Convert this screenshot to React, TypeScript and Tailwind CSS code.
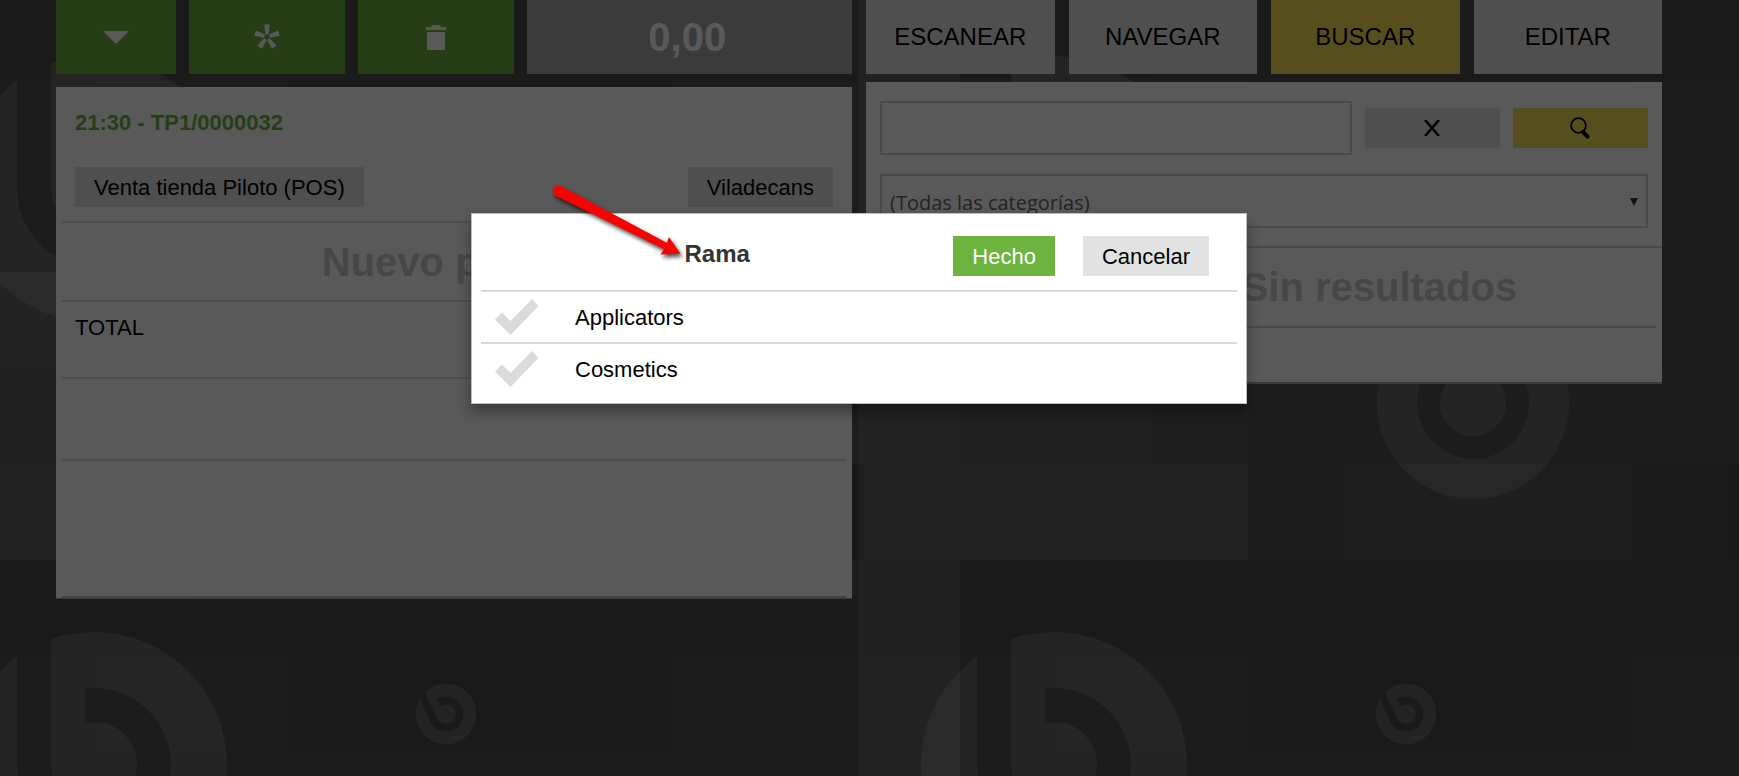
import React from 'react';

// Tile of the page background: 10 x 6 squares of 96px
const squares = [
    { x: 0, y: 0, w: 192, h: 96, fill: '#4a4a4a' },
    { x: 192, y: 0, w: 768, h: 96, fill: '#4d4d4d' },
    { x: 96, y: 96, w: 192, h: 96, fill: '#525252' },
    { x: 288, y: 96, w: 384, h: 96, fill: '#4b4b4b' },
    { x: 672, y: 96, w: 288, h: 96, fill: '#515151' },
    { x: 0, y: 288, w: 96, h: 96, fill: '#646464' },
    { x: 0, y: 384, w: 192, h: 96, fill: '#606060' },
    { x: 192, y: 384, w: 96, h: 96, fill: '#575757' },
    { x: 288, y: 384, w: 672, h: 96, fill: '#535353' },
    { x: 0, y: 480, w: 96, h: 96, fill: '#616161' },
    { x: 96, y: 480, w: 192, h: 96, fill: '#646464' },
    { x: 288, y: 480, w: 96, h: 96, fill: '#535353' },
    { x: 384, y: 480, w: 96, h: 96, fill: '#585858' },
    { x: 480, y: 480, w: 96, h: 96, fill: '#5a5a5a' },
    { x: 576, y: 480, w: 96, h: 96, fill: '#575757' },
    { x: 672, y: 480, w: 96, h: 96, fill: '#4e4e4e' },
    { x: 768, y: 480, w: 96, h: 96, fill: '#474747' },
];

const Backdrop: React.FC = () => (
    <svg className="absolute inset-0 h-full w-full" aria-hidden="true">
        <defs>
            <mask id="logo-mask" maskUnits="userSpaceOnUse" x="-140" y="-140" width="280" height="280">
                <circle r="133" fill="white" />
                <circle r="60" fill="none" stroke="black" strokeWidth="34" />
                <rect x="-77" y="-140" width="34" height="140" fill="black" />
                <rect x="-43" y="-100" width="34" height="100" fill="white" />
            </mask>
            <g id="logo">
                <rect x="-140" y="-140" width="280" height="280" fill="white" fillOpacity="0.16" mask="url(#logo-mask)" />
            </g>
            <pattern id="tile" x="0" y="-16" width="960" height="576" patternUnits="userSpaceOnUse">
                <rect width="960" height="576" fill="#505050" />
                {squares.map((s) => (
                    <rect key={`${s.x}-${s.y}`} x={s.x} y={s.y} width={s.w} height={s.h} fill={s.fill} />
                ))}
                <use href="#logo" x="94" y="205" />
                <use href="#logo" x="1054" y="205" />
                <use href="#logo" transform="translate(446 154) rotate(-25) scale(0.228)" />
                <circle cx="513" cy="419" r="76" fill="none" stroke="white" strokeOpacity="0.14" strokeWidth="40" />
                <circle cx="513" cy="419" r="33" fill="white" fillOpacity="0.14" />
            </pattern>
        </defs>
        <rect width="100%" height="100%" fill="url(#tile)" />
        <rect x="858" width="102" height="100%" fill="white" fillOpacity="0.11" />
    </svg>
);

const CheckIcon: React.FC = () => (
    <svg className="h-9 w-11 text-[#dadada] peer-checked:text-[#6cb33f]" viewBox="0 0 44 36" aria-hidden="true">
        <path d="M0 20.500 7 13.500 15.500 22 37 0 43.500 7 15.500 36Z" fill="currentColor" />
    </svg>
);

const tabs = [
    { label: 'ESCANEAR', active: false },
    { label: 'NAVEGAR', active: false },
    { label: 'BUSCAR', active: true },
    { label: 'EDITAR', active: false },
];

const branches = ['Applicators', 'Cosmetics'];

const TicketPanel: React.FC = () => (
    <section className="flex flex-col gap-[13px]">
        <div className="grid h-[74px] grid-cols-[120fr_156fr_155fr_325fr] gap-[13px] text-white">
            <button className="flex items-center justify-center bg-[#6cb33f]" aria-label="Menú">
                <svg className="h-[13px] w-[26px]" viewBox="0 0 26 13">
                    <path d="M0 0H26L13 13Z" fill="currentColor" />
                </svg>
            </button>
            <button className="flex items-center justify-center bg-[#6cb33f]" aria-label="Nuevo">
                <svg className="h-[26px] w-[26px]" viewBox="-13 -13 26 26">
                    {[0, 72, 144, 216, 288].map((angle) => (
                        <path key={angle} d="M-1.500 -2.500 -2.700 -12.500H2.700L1.500 -2.500Z" transform={`rotate(${angle})`} fill="currentColor" />
                    ))}
                </svg>
            </button>
            <button className="flex items-center justify-center bg-[#6cb33f]" aria-label="Eliminar">
                <svg className="h-[25px] w-5" viewBox="0 0 20 25">
                    <path d="M0 5V2H5L6 0H14L15 2H20V5ZM1 7H19V25H1Z" fill="currentColor" />
                </svg>
            </button>
            <button className="bg-[#a8a8a8] pr-1 text-[40px] font-bold">0,00</button>
        </div>

        <div className="border-b border-[#a6a6a6] bg-white px-[6px]">
            <div className="border-b-2 border-[#dcdcdc] px-[13px] pt-[22px] pb-[14px]">
                <h1 className="mb-[30px] leading-7 font-bold text-[#6cb33f]">21:30 - TP1/0000032</h1>
                <div className="flex justify-between">
                    <button className="h-10 bg-[#e2e2e2] px-[19px]">Venta tienda Piloto (POS)</button>
                    <button className="h-10 bg-[#e2e2e2] px-[19px]">Viladecans</button>
                </div>
            </div>
            <div className="flex h-[79px] items-center justify-center border-b-2 border-[#dcdcdc] text-[40px] font-bold text-[#cccccc]">
                Nuevo pedido
            </div>
            <div className="h-[77px] border-b-2 border-[#dcdcdc] px-[13px] pt-3 leading-7">TOTAL</div>
            <div className="h-[82px] border-b-2 border-[#dcdcdc]" />
            <div className="h-[137px] border-b-2 border-[#c4c4c4]" />
        </div>
    </section>
);

const SearchPanel: React.FC = () => (
    <section className="flex flex-col gap-2">
        <div className="grid h-[74px] grid-cols-4 gap-[14px]">
            {tabs.map((tab) => (
                <button key={tab.label} className={tab.active ? 'bg-[#f6e254] text-2xl' : 'bg-[#e2e2e2] text-2xl'}>
                    {tab.label}
                </button>
            ))}
        </div>

        <div className="border-b-2 border-[#a6a6a6] bg-white">
            <div className="flex flex-col gap-[19px] border-b-2 border-[#d4d4d4] px-[14px] pt-[19px] pb-[18px]">
                <div className="grid grid-cols-[471fr_135fr_135fr] items-center gap-[13px]">
                    <input className="h-[54px] w-full border-2 border-[#d4d4d4] bg-white px-[10px]" aria-label="Buscar producto" />
                    <button className="flex h-10 items-center justify-center bg-[#e2e2e2]" aria-label="Borrar">
                        <svg className="h-4 w-[18px]" viewBox="0 0 18 16" fill="none" stroke="currentColor" strokeWidth="2.600">
                            <path d="M2 0 16 16M16 0 2 16" />
                        </svg>
                    </button>
                    <button className="flex h-10 items-center justify-center bg-[#f6e254]" aria-label="Buscar">
                        <svg className="h-[22px] w-5" viewBox="0 0 20 22" fill="none" stroke="currentColor">
                            <circle cx="8.500" cy="8.500" r="7.400" strokeWidth="1.800" />
                            <path d="M13 15 17.500 19.500" strokeWidth="4" strokeLinecap="round" />
                        </svg>
                    </button>
                </div>
                <div className="relative">
                    <select
                        className="h-[54px] w-full appearance-none border-2 border-[#d4d4d4] bg-white px-2 pt-1 font-['Open_Sans',sans-serif] text-xl text-[#666666]"
                        aria-label="Categoría"
                    >
                        <option>(Todas las categorías)</option>
                    </select>
                    <svg className="pointer-events-none absolute top-6 right-[10px] h-2 w-2 text-[#333333]" viewBox="0 0 8 8">
                        <path d="M0 0H8L4 8Z" fill="currentColor" />
                    </svg>
                </div>
            </div>
            <div className="mx-[6px] flex h-20 items-center justify-center border-b-2 border-[#d4d4d4] pl-[29%] text-[40px] font-bold text-[#cccccc]">
                Sin resultados
            </div>
            <div className="h-[54px]" />
        </div>
    </section>
);

const BranchDialog: React.FC = () => (
    <div
        role="dialog"
        aria-labelledby="branch-title"
        className="relative w-full max-w-[776px] border border-[#bdbdbd] bg-white px-[9px] pb-[9px] shadow-[0_8px_12px_rgba(0,0,0,0.35)]"
    >
        <div className="flex border-b-2 border-[#d9d9d9] pt-[22px] pr-7 pb-[14px]">
            <h2 id="branch-title" className="flex-1 text-center text-2xl leading-9 font-bold text-[#333333]">
                Rama
            </h2>
            <div className="flex gap-7">
                <button className="h-10 bg-[#6cb33f] px-[19px] text-white">Hecho</button>
                <button className="h-10 bg-[#e2e2e2] px-[19px]">Cancelar</button>
            </div>
        </div>
        <div className="divide-y-2 divide-[#d9d9d9]">
            {branches.map((name) => (
                <label key={name} className="flex items-center gap-9 py-[7px] pl-[14px]">
                    <input type="checkbox" className="peer sr-only" />
                    <CheckIcon />
                    <span>{name}</span>
                </label>
            ))}
        </div>

        {/* Pointer to the title */}
        <svg className="pointer-events-none absolute -top-[33px] left-[75px] h-[85px] w-[145px] drop-shadow-[2px_3px_2px_rgba(0,0,0,0.7)]" viewBox="547 180 145 85" aria-hidden="true">
            <path d="M560.500 185 666.700 241.700 669 236 680.500 252.700 660.500 253.500 664 248.300 556 195A5.300 5.300 0 0 1 560.500 185Z" fill="#ff0000" />
        </svg>
    </div>
);

const App: React.FC = () => {
    return (
        <div className="relative min-h-screen overflow-hidden font-['Liberation_Sans',Arial,sans-serif] text-[22px] text-black">
            <Backdrop />
            <main className="relative grid grid-cols-2 items-start gap-[14px] pr-[77px] pl-14">
                <TicketPanel />
                <SearchPanel />
            </main>
            <div className="absolute inset-0 flex items-start justify-center bg-black/65 pt-[213px] pr-[77px] pl-14">
                <BranchDialog />
            </div>
        </div>
    );
};

export default App;
